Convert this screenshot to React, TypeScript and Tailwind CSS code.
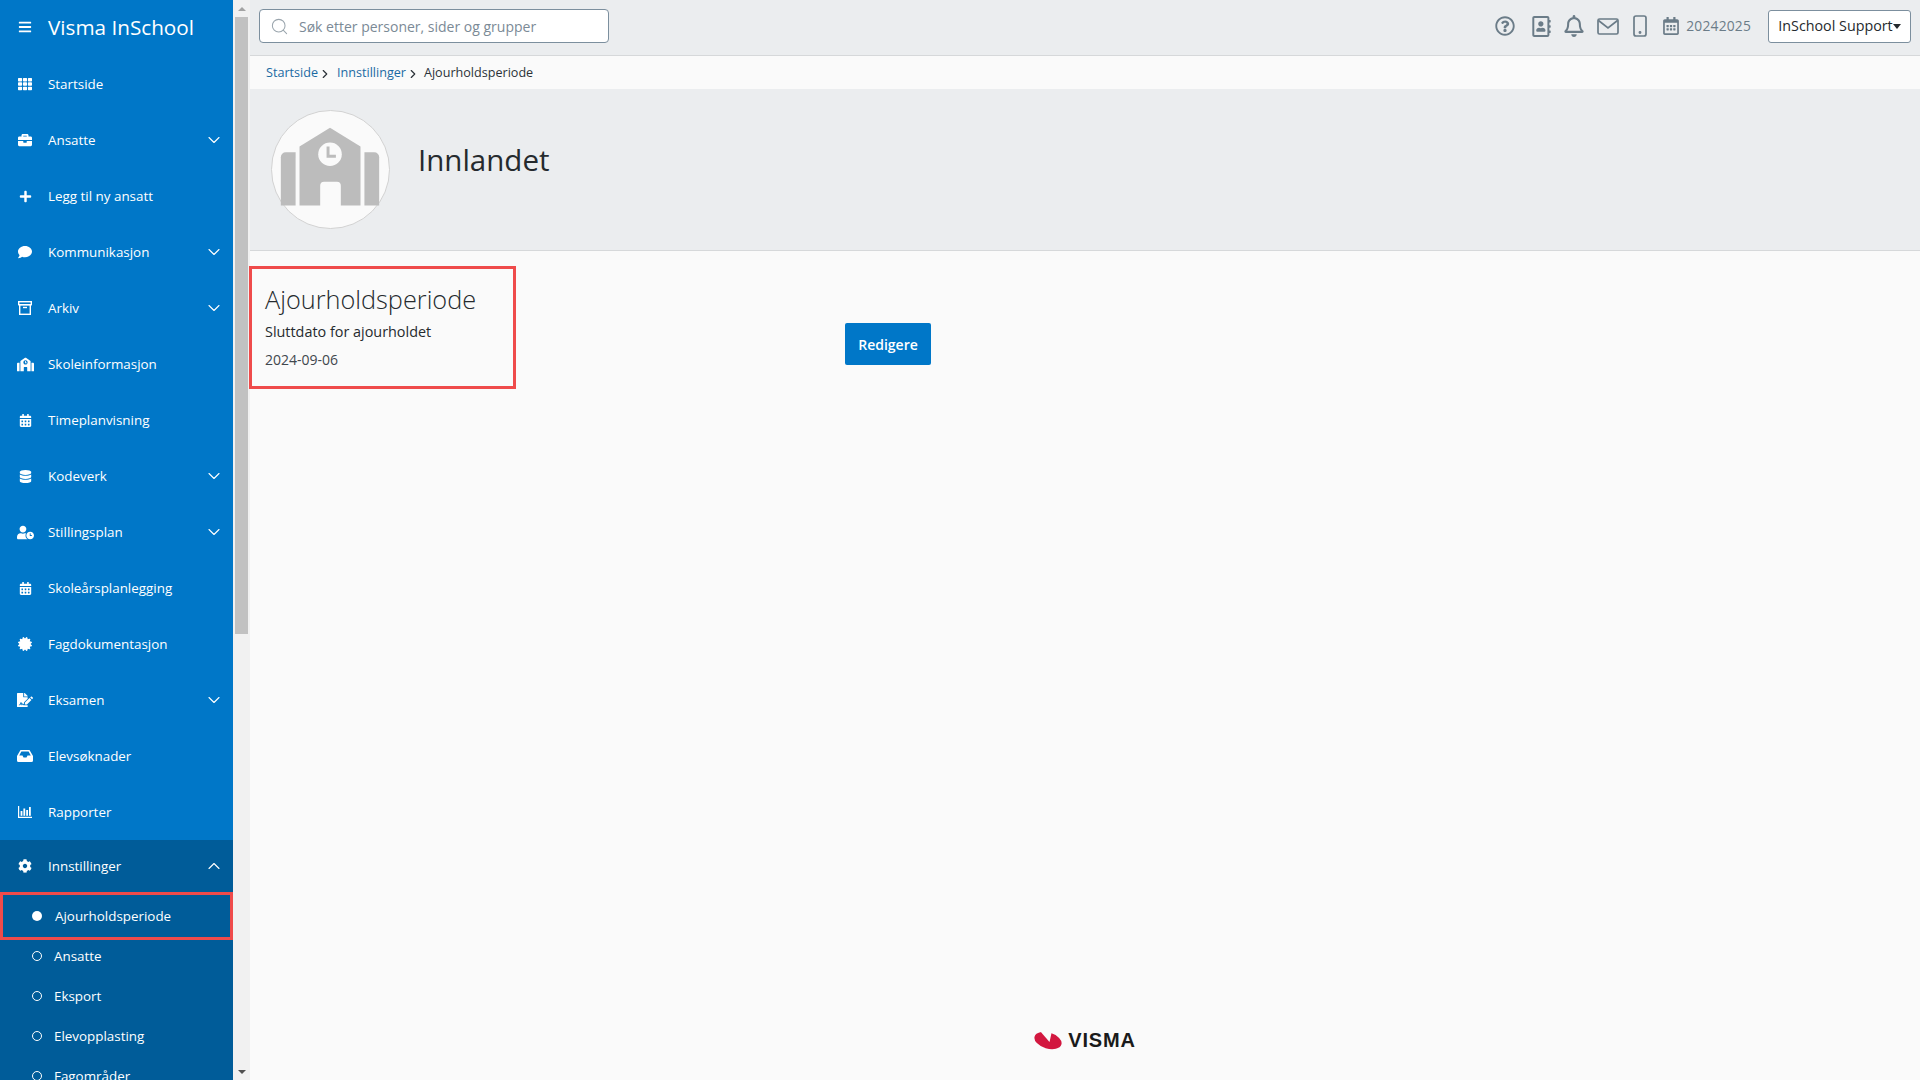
import React from "react";
import {
  FaTh, FaBriefcase, FaPlus, FaComment, FaSchool, FaCalendarAlt, FaDatabase, FaUserClock,
  FaCertificate, FaFileSignature, FaCog, FaRegQuestionCircle, FaRegAddressBook, FaRegBell,
  FaRegCalendarAlt, FaBars,
} from "react-icons/fa";
import { ChevronDown, ChevronUp, Search, ChevronRight } from "lucide-react";

const ArchiveIcon = () => (
  <svg width="14" height="14" viewBox="0 0 14 14" fill="none" stroke="white" strokeWidth="1.4">
    <rect x="0.7" y="0.7" width="12.6" height="3" />
    <rect x="1.7" y="3.7" width="10.6" height="9.6" />
    <path d="M5 6.500h4" />
  </svg>
);
const InboxIcon = () => (
  <svg width="16" height="12" viewBox="0 0 16 12" fill="white">
    <path d="M3.500 0h9l3.500 6v4.500a1.500 1.500 0 0 1-1.500 1.500h-13A1.500 1.500 0 0 1 0 10.500V6zM4.400 1.500 2.200 5.500H5.500l1 2h3l1-2h3.300l-2.200-4z" fillRule="evenodd" />
  </svg>
);
const ChartIcon = () => (
  <svg width="14" height="12" viewBox="0 0 14 12" fill="white">
    <path d="M0 0h1.200v10.800H14V12H0z" />
    <rect x="2.600" y="5" width="1.800" height="4.800" />
    <rect x="5.400" y="2.500" width="1.800" height="7.300" />
    <rect x="8.200" y="4" width="1.800" height="5.800" />
    <rect x="11" y="1" width="1.800" height="8.800" />
  </svg>
);

type Item = { label: string; icon: React.ReactNode; chevron?: boolean };
const items: Item[] = [
  { label: "Startside", icon: <FaTh size={14} /> },
  { label: "Ansatte", icon: <FaBriefcase size={14} />, chevron: true },
  { label: "Legg til ny ansatt", icon: <FaPlus size={13} /> },
  { label: "Kommunikasjon", icon: <FaComment size={14} />, chevron: true },
  { label: "Arkiv", icon: <ArchiveIcon />, chevron: true },
  { label: "Skoleinformasjon", icon: <FaSchool size={17} /> },
  { label: "Timeplanvisning", icon: <FaCalendarAlt size={13} /> },
  { label: "Kodeverk", icon: <FaDatabase size={13} />, chevron: true },
  { label: "Stillingsplan", icon: <FaUserClock size={17} />, chevron: true },
  { label: "Skoleårsplanlegging", icon: <FaCalendarAlt size={13} /> },
  { label: "Fagdokumentasjon", icon: <FaCertificate size={14} /> },
  { label: "Eksamen", icon: <FaFileSignature size={16} />, chevron: true },
  { label: "Elevsøknader", icon: <InboxIcon /> },
  { label: "Rapporter", icon: <ChartIcon /> },
];
const subs = ["Ansatte", "Eksport", "Elevopplasting", "Fagområder"];

function NavRow({ item }: { item: Item }) {
  return (
    <div className="flex h-[56px] shrink-0 items-center text-white">
      <span className="flex w-[48px] shrink-0 justify-center pl-[2px] text-white">{item.icon}</span>
      <span className="flex-1 text-[13.4px]">{item.label}</span>
      {item.chevron && <ChevronDown size={20} strokeWidth={1.3} className="mr-[9px]" />}
    </div>
  );
}

function Sidebar() {
  return (
    <aside className="flex h-full w-[233px] shrink-0 flex-col overflow-hidden bg-[#0077c8]">
      <div className="flex h-[56px] shrink-0 items-center pb-[2px] text-white">
        <span className="flex w-[48px] justify-center pl-[2px]"><FaBars size={14} /></span>
        <span className="text-[20.7px] font-medium leading-none">Visma InSchool</span>
      </div>
      {items.map((it) => <NavRow key={it.label} item={it} />)}
      <div className="flex flex-1 flex-col bg-[#005c99]">
        <div className="flex h-[52px] shrink-0 items-center text-white">
          <span className="flex w-[48px] justify-center pl-[2px]"><FaCog size={14} /></span>
          <span className="flex-1 text-[13.4px]">Innstillinger</span>
          <ChevronUp size={20} strokeWidth={1.3} className="mr-[9px]" />
        </div>
        <div className="flex h-[48px] shrink-0 items-center border-[3px] border-[#ef4b4b] text-white">
          <span className="ml-[29px] h-[10px] w-[10px] rounded-full bg-white" />
          <span className="ml-[13px] text-[13.4px]">Ajourholdsperiode</span>
        </div>
        <div className="-mt-[4px] flex flex-col">
          {subs.map((s) => (
            <div key={s} className="flex h-[40px] shrink-0 items-center text-white">
              <span className="ml-[32px] h-[10px] w-[10px] rounded-full border border-white" />
              <span className="ml-[12px] text-[13.4px]">{s}</span>
            </div>
          ))}
        </div>
      </div>
    </aside>
  );
}

function Scrollbar() {
  return (
    <div className="flex h-full w-[17px] shrink-0 flex-col bg-[#f1f1f1]">
      <div className="flex h-[17px] items-center justify-center">
        <span className="border-x-[4px] border-b-[4px] border-x-transparent border-b-[#a3a3a3]" />
      </div>
      <div className="mx-[2px] h-[617px] bg-[#c1c1c1]" />
      <div className="flex-1" />
      <div className="flex h-[17px] items-center justify-center">
        <span className="border-x-[4px] border-t-[4px] border-x-transparent border-t-[#505050]" />
      </div>
    </div>
  );
}

function Topbar() {
  const c = "#6b7c88";
  return (
    <header className="flex h-[56px] shrink-0 items-center border-b border-[#d6d8da] bg-[#ebedef] pb-[3px] pl-[9px] pr-[9px]">
      <div className="flex h-[34px] w-[350px] items-center rounded-[4px] border border-[#7c8f9e] bg-white pl-[10px]">
        <Search size={19} strokeWidth={1.3} color="#9aa5ad" />
        <span className="ml-[10px] text-[14px] text-[#7b8a96]">Søk etter personer, sider og grupper</span>
      </div>
      <div className="flex-1" />
      <div className="flex items-center text-[#6b7c88]">
        <FaRegQuestionCircle size={20} color={c} />
        <FaRegAddressBook size={21} color={c} className="ml-[16px]" />
        <FaRegBell size={22} color={c} className="ml-[11px]" />
        <svg width="22" height="17" viewBox="0 0 22 17" fill="none" stroke={c} strokeWidth="1.700" className="ml-[12px]">
          <rect x="1" y="1" width="20" height="15" rx="1.500" />
          <path d="M1.500 2.500 11 10l9.500-7.500" />
        </svg>
        <svg width="14" height="22" viewBox="0 0 14 22" fill="none" stroke={c} strokeWidth="1.700" className="ml-[14px]">
          <rect x="1" y="1" width="12" height="20" rx="2" />
          <circle cx="7" cy="17.500" r="0.600" fill={c} />
        </svg>
        <FaRegCalendarAlt size={18} color={c} className="ml-[15px]" />
        <span className="ml-[6px] text-[13.8px] font-medium tracking-[0.2px]">20242025</span>
      </div>
      <div className="ml-[17px] flex h-[33px] w-[143px] items-center justify-center rounded-[3px] border border-[#7c8f9e] bg-white text-[14.3px] text-[#252a2e]">
        InSchool Support
        <span className="border-x-[4.500px] border-t-[5px] border-x-transparent border-t-[#252a2e]" />
      </div>
    </header>
  );
}

function Crumbs() {
  return (
    <nav className="flex h-[33px] shrink-0 items-center bg-[#fafafa] pl-[16px] pt-[2px] text-[12.6px] text-[#2b3238]">
      <span className="text-[#1a6aa3]">Startside</span>
      <ChevronRight size={14} strokeWidth={2} className="mr-[5px]" />
      <span className="text-[#1a6aa3]">Innstillinger</span>
      <ChevronRight size={14} strokeWidth={2} className="mr-[4px]" />
      <span className="font-medium">Ajourholdsperiode</span>
    </nav>
  );
}

function Avatar() {
  return (
    <div className="ml-[21px] h-[119px] w-[119px] shrink-0 rounded-full border border-[#d2d2d2] bg-[#fafafa]">
      <svg viewBox="0 0 119 119" width="117" height="117">
        <g fill="#bcbcbc">
          <path d="M9 47a5 5 0 0 1 5-5h10v54H9z" />
          <path d="M28 36 59 17l31 19v60H70V76a4 4 0 0 0-4-4H53a4 4 0 0 0-4 4v20H28z" />
          <path d="M94 42h10a5 5 0 0 1 5 5v49H94z" />
        </g>
        <circle cx="59" cy="44" r="12" fill="#fafafa" />
        <path d="M57 36v10h8" fill="none" stroke="#bcbcbc" strokeWidth="3" />
      </svg>
    </div>
  );
}

function VismaLogo() {
  return (
    <div className="flex items-center gap-[6px]">
      <svg width="28" height="19" viewBox="0 0 28 19">
        <ellipse cx="14" cy="9.500" rx="14" ry="8" transform="rotate(17 14 9.500)" fill="#d2173f" />
        <path d="M6 0 15.500 11 18 0z" fill="#fafafa" />
      </svg>
      <span className="text-[20px] font-bold leading-none tracking-[0.8px] text-[#1a1a1a] [font-family:'Liberation_Sans',sans-serif]">VISMA</span>
    </div>
  );
}

export default function App() {
  return (
    <div className="flex h-screen w-full overflow-hidden bg-[#fafafa] [font-family:'Open_Sans',sans-serif]">
      <Sidebar />
      <Scrollbar />
      <main className="flex min-w-0 flex-1 flex-col">
        <Topbar />
        <Crumbs />
        <section className="flex h-[162px] shrink-0 border-b border-[#d6d8da] bg-[#ebedef] pt-[21px]">
          <Avatar />
          <h1 className="ml-[28px] mt-[30px] h-fit text-[29.5px] leading-[40px] text-[#252a2e]">Innlandet</h1>
        </section>
        <div className="flex items-start pt-[15px]">
          <div className="-ml-[1px] flex h-[123px] w-[267px] flex-col border-[3px] border-[#ef4b4b] pl-[13px] pt-[14px] text-[#252a2e]">
            <h2 className="text-[25.3px] font-light leading-[32px]">Ajourholdsperiode</h2>
            <p className="mt-[7px] text-[14.400px] font-medium leading-[20px]">Sluttdato for ajourholdet</p>
            <p className="mt-[8px] text-[14px] leading-[20px] text-[#3f474d]">2024-09-06</p>
          </div>
          <button className="ml-[329px] mt-[57px] h-[42px] w-[86px] rounded-[2px] bg-[#0077c8] text-[14px] font-semibold text-white">Redigere</button>
        </div>
        <div className="flex-1" />
        <footer className="flex justify-center pb-[30px]"><VismaLogo /></footer>
      </main>
    </div>
  );
}
